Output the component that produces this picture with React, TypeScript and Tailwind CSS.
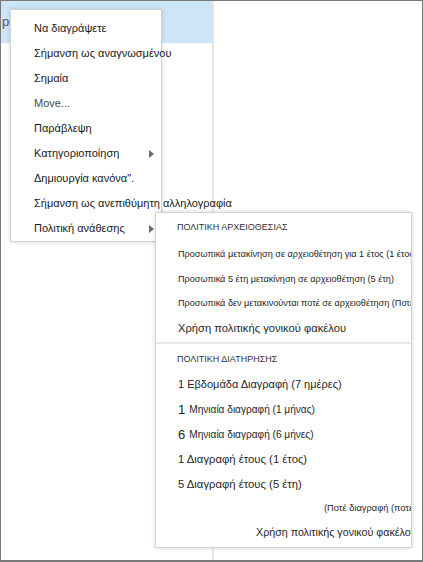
const font = { fontFamily: '"Liberation Sans", Arial, sans-serif' };

function Arrow() {
  return (
    <svg width="5" height="8" viewBox="0 0 5 8" className="absolute left-[138px]">
      <path d="M0 0 L5 4 L0 8 Z" fill="#6b6b6b" />
    </svg>
  );
}

const mainItems: { label: string; arrow?: boolean; muted?: boolean }[] = [
  { label: 'Να διαγράψετε' },
  { label: 'Σήμανση ως αναγνωσμένου' },
  { label: 'Σημαία' },
  { label: 'Move...', muted: true },
  { label: 'Παράβλεψη' },
  { label: 'Κατηγοριοποίηση', arrow: true },
  { label: 'Δημιουργία κανόνα".' },
  { label: 'Σήμανση ως ανεπιθύμητη αλληλογραφία' },
  { label: 'Πολιτική ανάθεσης', arrow: true },
];

export default function App() {
  return (
    <div
      className="relative flex w-[423px] h-[562px] overflow-hidden bg-white border border-b-2 border-[#7a7a7a]"
      style={font}
    >
      {/* list pane */}
      <div className="w-[211px] shrink-0">
        <div className="h-[42px] bg-[#cde6f7] flex items-center pl-[1px] text-[13px] text-[#555]">pe</div>
      </div>
      {/* reading pane */}
      <div className="flex-1 border-l-2 border-[#e6e6e6]" />

      {/* context menu */}
      <div className="absolute left-[9px] top-[8px] w-[152px] h-[233px] bg-white border border-[#d4d4d4] shadow-[0_0_4px_rgba(0,0,0,0.18)] pt-[6px]">
        {mainItems.map((it) => (
          <div key={it.label} className="relative h-[25px] flex items-center pl-[23px] whitespace-nowrap">
            <span className={`text-[11px] ${it.muted ? 'text-[#4a4a4a]' : 'text-[#1a1a1a]'}`}>{it.label}</span>
            {it.arrow && <Arrow />}
          </div>
        ))}
      </div>

      {/* submenu */}
      <div className="absolute left-[154px] top-[211px] w-[257px] h-[336px] bg-white border border-[#d4d4d4] shadow-[0_0_4px_rgba(0,0,0,0.18)] overflow-hidden whitespace-nowrap text-[#262626]">
        <div className="h-[30px] flex items-center pl-[21px] text-[9px] text-[#333]">ΠΟΛΙΤΙΚΗ ΑΡΧΕΙΟΘΕΣΙΑΣ</div>
        <div className="h-[24.3px] flex items-center pl-[22px] text-[9.1px]">Προσωπικά μετακίνηση σε αρχειοθέτηση για 1 έτος (1 έτος)</div>
        <div className="h-[24.3px] flex items-center pl-[22px] text-[9.1px]">Προσωπικά 5 έτη μετακίνηση σε αρχειοθέτηση (5 έτη)</div>
        <div className="h-[24.3px] flex items-center pl-[22px] text-[9.1px]">Προσωπικά δεν μετακινούνται ποτέ σε αρχειοθέτηση (Ποτέ)</div>
        <div className="h-[24.3px] flex items-center pl-[22px] text-[11.2px]">Χρήση πολιτικής γονικού φακέλου</div>
        <div className="mt-[2px] border-t-2 border-[#e8e8e8]" />
        <div className="h-[28px] flex items-center pt-[4px] pl-[21px] text-[9px] text-[#333]">ΠΟΛΙΤΙΚΗ ΔΙΑΤΗΡΗΣΗΣ</div>
        <div className="h-[25px] flex items-center pl-[22px] text-[11px]">1 Εβδομάδα Διαγραφή (7 ημέρες)</div>
        <div className="h-[25px] flex items-center gap-[4px] pl-[22px]">
          <span className="text-[13px]">1</span>
          <span className="text-[10.1px]">Μηνιαία διαγραφή (1 μήνας)</span>
        </div>
        <div className="h-[25px] flex items-center gap-[4px] pl-[22px]">
          <span className="text-[13px]">6</span>
          <span className="text-[10.1px]">Μηνιαία διαγραφή (6 μήνες)</span>
        </div>
        <div className="h-[25px] flex items-center pl-[22px] text-[11.3px]">1 Διαγραφή έτους (1 έτος)</div>
        <div className="h-[25px] flex items-center pl-[22px] text-[11.3px]">5 Διαγραφή έτους (5 έτη)</div>
        <div className="h-[23px] flex items-center pl-[168px] text-[9.3px]">(Ποτέ διαγραφή (ποτέ διαγραφή)</div>
        <div className="h-[23px] flex items-center pl-[100px] text-[10.7px]">Χρήση πολιτικής γονικού φακέλου</div>
      </div>
    </div>
  );
}
